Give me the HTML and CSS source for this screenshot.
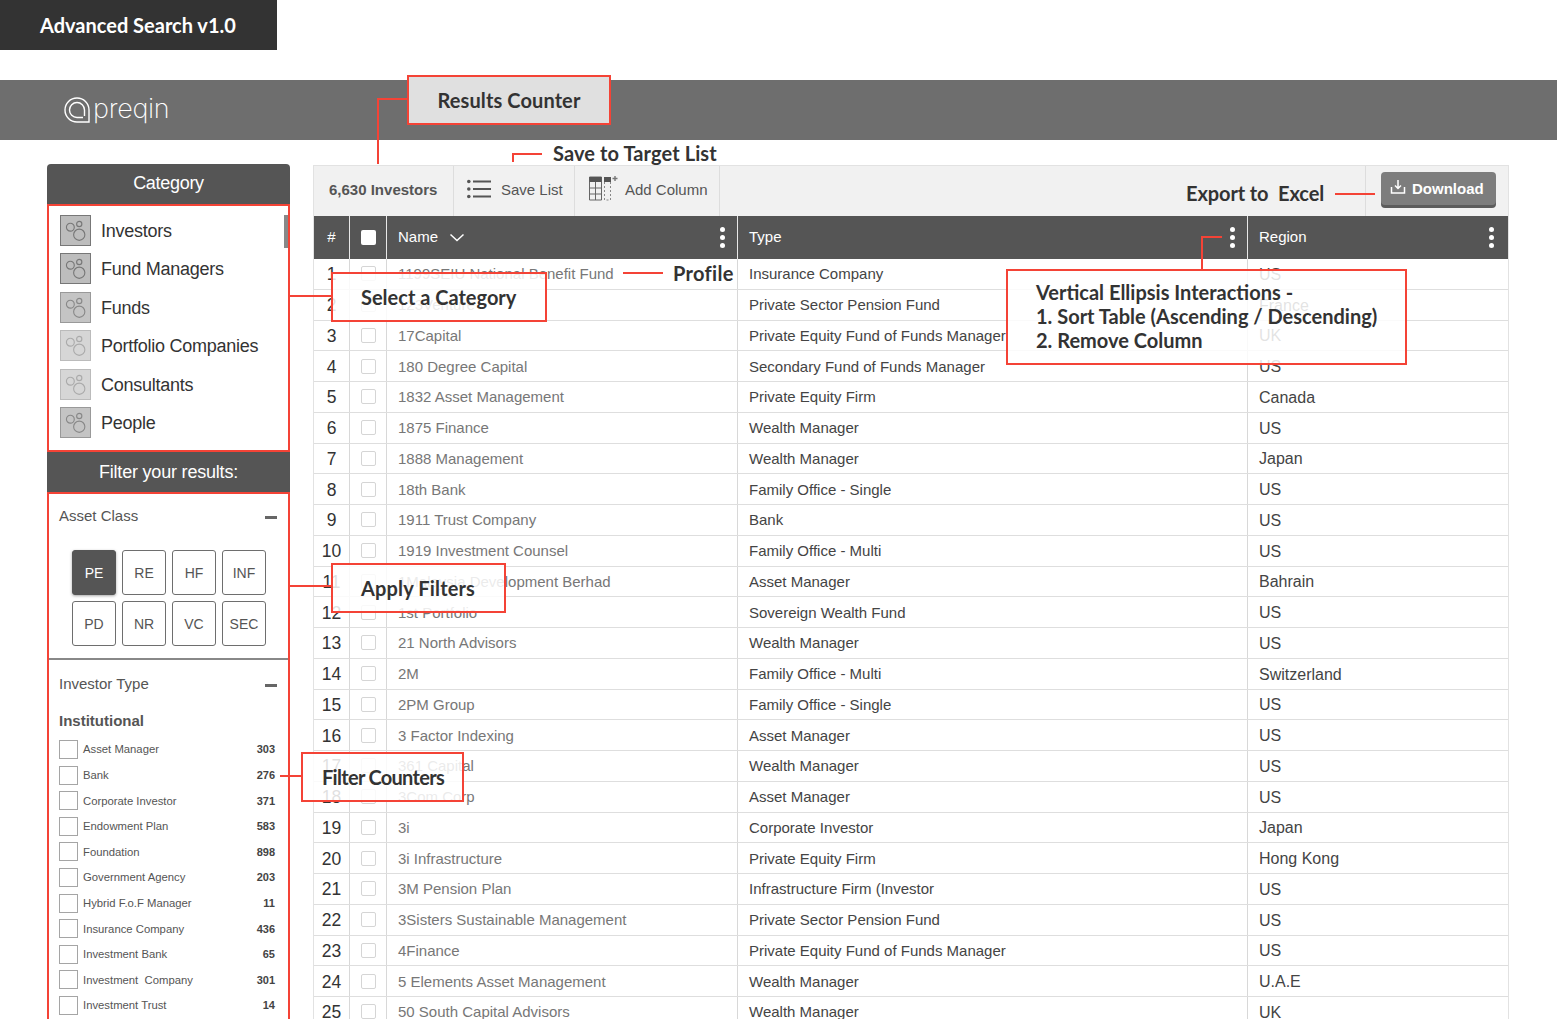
FILE: index.html
```html
<!DOCTYPE html>
<html>
  <head>
    <title>Advanced Search v1.0</title>
    <link rel="stylesheet" href="styles.css">
  </head>
  <body>
    <div class="page">
      <svg width="0" height="0" class="defs">
        <symbol id="cat-icon" viewBox="0 0 31 31">
          <circle cx="10" cy="12" r="4.2" />
          <circle cx="19.5" cy="8.5" r="2.8" />
          <circle cx="19.5" cy="20" r="6" />
        </symbol>
      </svg>

      <div class="title-bar">Advanced Search v1.0</div>

      <header class="top-bar">
        <svg class="logo-mark" width="28" height="28" viewBox="0 0 28 28">
          <path d="M14 26 H26 V14 A12 12 0 1 0 14 26 Z" />
          <path d="M14 21.5 H20 M21.5 20 V14 A7.5 7.5 0 1 0 14 21.5" />
        </svg>
        <span class="logo-text">preqin</span>
      </header>

      <div class="content">
        <aside class="sidebar">
          <div class="side-head side-head-top">Category</div>
          <div class="cat-list">
            <div class="cat-item"><svg class="cat-icon"><use href="#cat-icon" /></svg>Investors</div>
            <div class="cat-item"><svg class="cat-icon"><use href="#cat-icon" /></svg>Fund Managers</div>
            <div class="cat-item"><svg class="cat-icon light"><use href="#cat-icon" /></svg>Funds</div>
            <div class="cat-item"><svg class="cat-icon lighter"><use href="#cat-icon" /></svg>Portfolio Companies</div>
            <div class="cat-item"><svg class="cat-icon lighter"><use href="#cat-icon" /></svg>Consultants</div>
            <div class="cat-item"><svg class="cat-icon light"><use href="#cat-icon" /></svg>People</div>
            <div class="cat-scroll"></div>
          </div>
          <div class="side-head side-head-filter">Filter your results:</div>
          <div class="filter-box">
            <section class="filter-section">
              <div class="filter-head">Asset Class <span class="minus"></span></div>
              <div class="asset-grid">
                <div class="asset-btn active">PE</div>
                <div class="asset-btn">RE</div>
                <div class="asset-btn">HF</div>
                <div class="asset-btn">INF</div>
                <div class="asset-btn">PD</div>
                <div class="asset-btn">NR</div>
                <div class="asset-btn">VC</div>
                <div class="asset-btn">SEC</div>
              </div>
            </section>
            <section>
              <div class="filter-head filter-head-tall">Investor Type <span class="minus"></span></div>
              <div class="group-title">Institutional</div>
              <div class="check-row"><span class="check-box"></span><span class="check-label">Asset Manager</span><b>303</b></div>
              <div class="check-row"><span class="check-box"></span><span class="check-label">Bank</span><b>276</b></div>
              <div class="check-row"><span class="check-box"></span><span class="check-label">Corporate Investor</span><b>371</b></div>
              <div class="check-row"><span class="check-box"></span><span class="check-label">Endowment Plan</span><b>583</b></div>
              <div class="check-row"><span class="check-box"></span><span class="check-label">Foundation</span><b>898</b></div>
              <div class="check-row"><span class="check-box"></span><span class="check-label">Government Agency</span><b>203</b></div>
              <div class="check-row"><span class="check-box"></span><span class="check-label">Hybrid F.o.F Manager</span><b>11</b></div>
              <div class="check-row"><span class="check-box"></span><span class="check-label">Insurance Company</span><b>436</b></div>
              <div class="check-row"><span class="check-box"></span><span class="check-label">Investment Bank</span><b>65</b></div>
              <div class="check-row"><span class="check-box"></span><span class="check-label">Investment&nbsp; Company</span><b>301</b></div>
              <div class="check-row"><span class="check-box"></span><span class="check-label">Investment Trust</span><b>14</b></div>
            </section>
          </div>
        </aside>

        <main class="results">
          <div class="toolbar">
            <div class="tool tool-count">6,630 Investors</div>
            <div class="tool tool-save">
              <svg width="24" height="20" viewBox="0 0 24 20" class="tool-icon">
                <path d="M6 2.5 H24 M6 10 H24 M6 17.5 H24" />
                <circle cx="1.8" cy="2.5" r="1.8" />
                <circle cx="1.8" cy="10" r="1.8" />
                <circle cx="1.8" cy="17.5" r="1.8" />
              </svg>
              Save List
            </div>
            <div class="tool tool-add">
              <svg width="30" height="26" viewBox="0 0 30 26" class="col-icon">
                <path d="M0.5 2 H12.5 V25 H0.5 Z M0.5 13 H12.5 M0.5 19 H12.5 M6.5 7 V25" class="col-grid" />
                <path d="M0.5 2 H12.5 V7 H0.5 Z M15 2 H22 V7 H15 Z" class="col-fill" />
                <path d="M15.5 7 V25 H21.5 V7" class="col-dash" />
                <path d="M26 1 V6 M23.5 3.5 H28.5" class="col-plus" />
              </svg>
              Add Column
            </div>
            <div class="tool-spacer"></div>
            <div class="tool tool-download">
              <div class="download-btn">
                <svg width="16" height="16" viewBox="0 0 16 16">
                  <path d="M1.5 8 V14 H14.5 V8 M8 1 V9 M5 6.5 L8 9.5 L11 6.5" />
                </svg>
                Download
              </div>
            </div>
          </div>

          <div class="row row-head">
            <div class="cell">#</div>
            <div class="cell"><span class="row-check head-check"></span></div>
            <div class="cell cell-head-name">
              Name
              <svg width="16" height="9" viewBox="0 0 16 9" class="chevron"><path d="M1.5 1.5 L8 7.5 L14.5 1.5" /></svg>
              <span class="ellipsis"><i></i><i></i><i></i></span>
            </div>
            <div class="cell">Type <span class="ellipsis"><i></i><i></i><i></i></span></div>
            <div class="cell">Region <span class="ellipsis"><i></i><i></i><i></i></span></div>
          </div>

          <div class="row"><div class="cell">1</div><div class="cell"><span class="row-check"></span></div><div class="cell name">1199SEIU National Benefit Fund</div><div class="cell type">Insurance Company</div><div class="cell">US</div></div>
          <div class="row"><div class="cell">2</div><div class="cell"><span class="row-check"></span></div><div class="cell name">123Venture</div><div class="cell type">Private Sector Pension Fund</div><div class="cell">France</div></div>
          <div class="row"><div class="cell">3</div><div class="cell"><span class="row-check"></span></div><div class="cell name">17Capital</div><div class="cell type">Private Equity Fund of Funds Manager</div><div class="cell">UK</div></div>
          <div class="row"><div class="cell">4</div><div class="cell"><span class="row-check"></span></div><div class="cell name">180 Degree Capital</div><div class="cell type">Secondary Fund of Funds Manager</div><div class="cell">US</div></div>
          <div class="row"><div class="cell">5</div><div class="cell"><span class="row-check"></span></div><div class="cell name">1832 Asset Management</div><div class="cell type">Private Equity Firm</div><div class="cell">Canada</div></div>
          <div class="row"><div class="cell">6</div><div class="cell"><span class="row-check"></span></div><div class="cell name">1875 Finance</div><div class="cell type">Wealth Manager</div><div class="cell">US</div></div>
          <div class="row"><div class="cell">7</div><div class="cell"><span class="row-check"></span></div><div class="cell name">1888 Management</div><div class="cell type">Wealth Manager</div><div class="cell">Japan</div></div>
          <div class="row"><div class="cell">8</div><div class="cell"><span class="row-check"></span></div><div class="cell name">18th Bank</div><div class="cell type">Family Office - Single</div><div class="cell">US</div></div>
          <div class="row"><div class="cell">9</div><div class="cell"><span class="row-check"></span></div><div class="cell name">1911 Trust Company</div><div class="cell type">Bank</div><div class="cell">US</div></div>
          <div class="row"><div class="cell">10</div><div class="cell"><span class="row-check"></span></div><div class="cell name">1919 Investment Counsel</div><div class="cell type">Family Office - Multi</div><div class="cell">US</div></div>
          <div class="row"><div class="cell">11</div><div class="cell"><span class="row-check"></span></div><div class="cell name">1Malaysia Development Berhad</div><div class="cell type">Asset Manager</div><div class="cell">Bahrain</div></div>
          <div class="row"><div class="cell">12</div><div class="cell"><span class="row-check"></span></div><div class="cell name">1st Portfolio</div><div class="cell type">Sovereign Wealth Fund</div><div class="cell">US</div></div>
          <div class="row"><div class="cell">13</div><div class="cell"><span class="row-check"></span></div><div class="cell name">21 North Advisors</div><div class="cell type">Wealth Manager</div><div class="cell">US</div></div>
          <div class="row"><div class="cell">14</div><div class="cell"><span class="row-check"></span></div><div class="cell name">2M</div><div class="cell type">Family Office - Multi</div><div class="cell">Switzerland</div></div>
          <div class="row"><div class="cell">15</div><div class="cell"><span class="row-check"></span></div><div class="cell name">2PM Group</div><div class="cell type">Family Office - Single</div><div class="cell">US</div></div>
          <div class="row"><div class="cell">16</div><div class="cell"><span class="row-check"></span></div><div class="cell name">3 Factor Indexing</div><div class="cell type">Asset Manager</div><div class="cell">US</div></div>
          <div class="row"><div class="cell">17</div><div class="cell"><span class="row-check"></span></div><div class="cell name">361 Capital</div><div class="cell type">Wealth Manager</div><div class="cell">US</div></div>
          <div class="row"><div class="cell">18</div><div class="cell"><span class="row-check"></span></div><div class="cell name">3Com Corp</div><div class="cell type">Asset Manager</div><div class="cell">US</div></div>
          <div class="row"><div class="cell">19</div><div class="cell"><span class="row-check"></span></div><div class="cell name">3i</div><div class="cell type">Corporate Investor</div><div class="cell">Japan</div></div>
          <div class="row"><div class="cell">20</div><div class="cell"><span class="row-check"></span></div><div class="cell name">3i Infrastructure</div><div class="cell type">Private Equity Firm</div><div class="cell">Hong Kong</div></div>
          <div class="row"><div class="cell">21</div><div class="cell"><span class="row-check"></span></div><div class="cell name">3M Pension Plan</div><div class="cell type">Infrastructure Firm (Investor</div><div class="cell">US</div></div>
          <div class="row"><div class="cell">22</div><div class="cell"><span class="row-check"></span></div><div class="cell name">3Sisters Sustainable Management</div><div class="cell type">Private Sector Pension Fund</div><div class="cell">US</div></div>
          <div class="row"><div class="cell">23</div><div class="cell"><span class="row-check"></span></div><div class="cell name">4Finance</div><div class="cell type">Private Equity Fund of Funds Manager</div><div class="cell">US</div></div>
          <div class="row"><div class="cell">24</div><div class="cell"><span class="row-check"></span></div><div class="cell name">5 Elements Asset Management</div><div class="cell type">Wealth Manager</div><div class="cell">U.A.E</div></div>
          <div class="row"><div class="cell">25</div><div class="cell"><span class="row-check"></span></div><div class="cell name">50 South Capital Advisors</div><div class="cell type">Wealth Manager</div><div class="cell">UK</div></div>
        </main>
      </div>

      <!-- annotations drawn over the screen -->
      <svg class="leaders" width="1557" height="1019" viewBox="0 0 1557 1019">
        <path d="M407 99 H378 V164" />
        <path d="M542 154 H513 V162" />
        <path d="M623 273 H663" />
        <path d="M290 296 H331" />
        <path d="M290 586 H331" />
        <path d="M280 776 H301" />
        <path d="M1335 194 H1375" />
        <path d="M1222 237 H1202 V269" />
      </svg>
      <div class="note note-counter">Results Counter</div>
      <div class="note note-category">Select a Category</div>
      <div class="note note-filters">Apply Filters</div>
      <div class="note note-counters">Filter Counters</div>
      <div class="note note-ellipsis">Vertical Ellipsis Interactions -<br>1. Sort Table (Ascending / Descending)<br>2. Remove Column</div>
      <div class="label label-save">Save to Target List</div>
      <div class="label label-profile">Profile</div>
      <div class="label label-export">Export to&nbsp; Excel</div>
    </div>
  </body>
</html>
```

FILE: styles.css
```css
/* Reset */
html, body {
  margin: 0;
  padding: 0;
  height: 100%;
  overflow: hidden;
  background-color: #ffffff;
}

body {
  font-family: "Liberation Sans", Arial, sans-serif;
  color: #444444;
}

.page {
  position: relative;
  width: 1557px;
  height: 1019px;
  overflow: hidden;
}

.defs {
  position: absolute;
}

/* Title and top bar */
.title-bar {
  width: 277px;
  height: 50px;
  margin-bottom: 30px;
  padding-left: 40px;
  box-sizing: border-box;
  background-color: #333333;
  color: #ffffff;
  font-family: Lato, sans-serif;
  font-size: 20px;
  font-weight: 700;
  line-height: 51px;
}

.top-bar {
  display: flex;
  align-items: center;
  height: 60px;
  padding-left: 63px;
  background-color: #6e6e6e;
}

.logo-mark {
  fill: none;
  stroke: #ffffff;
  stroke-width: 1.4;
}

.logo-text {
  margin-left: 2px;
  margin-bottom: 3px;
  color: #ffffff;
  font-family: Inter, sans-serif;
  font-size: 27px;
  font-weight: 200;
  letter-spacing: -0.3px;
}

/* Main layout */
.content {
  display: flex;
  gap: 23px;
  padding: 24px 47px 0;
}

/* Sidebar */
.sidebar {
  flex: 0 0 243px;
  width: 243px;
}

.side-head {
  height: 40px;
  background-color: #555555;
  color: #ffffff;
  font-size: 18px;
  line-height: 38px;
  text-align: center;
  letter-spacing: -0.3px;
}

.side-head-top {
  border-radius: 4px 4px 0 0;
}

.side-head-filter {
  line-height: 41px;
  letter-spacing: -0.2px;
}

.cat-list {
  position: relative;
  height: 248px;
  padding: 9px 0 0 11px;
  box-sizing: border-box;
  border: 2px solid #f44336;
}

.cat-item {
  display: flex;
  align-items: flex-start;
  gap: 10px;
  height: 31px;
  margin-bottom: 7.4px;
  color: #333333;
  font-size: 18px;
  line-height: 33px;
  letter-spacing: -0.25px;
}

.cat-scroll {
  position: absolute;
  top: 9px;
  right: 0;
  width: 4px;
  height: 33px;
  background-color: #888888;
}

.cat-icon {
  width: 31px;
  height: 31px;
  box-sizing: border-box;
  border: 1.5px solid #777777;
  background-color: #bdbdbd;
  fill: none;
  stroke: #777777;
  stroke-width: 1.2;
}

.cat-icon.light {
  border-color: #999999;
  background-color: #c4c4c4;
  stroke: #888888;
}

.cat-icon.lighter {
  border-color: #bbbbbb;
  background-color: #d6d6d6;
  stroke: #aaaaaa;
}

.filter-box {
  border: 2px solid #f44336;
  border-bottom: none;
  height: 600px;
}

.filter-section {
  height: 164px;
  border-bottom: 2px solid #888888;
}

.filter-head {
  display: flex;
  align-items: center;
  justify-content: space-between;
  height: 42px;
  padding: 0 11px 0 10px;
  color: #555555;
  font-size: 15px;
}

.filter-head-tall {
  height: 46px;
}

.minus {
  width: 12px;
  height: 3px;
  margin-top: 4px;
  background-color: #666666;
}

.asset-grid {
  display: grid;
  grid-template-columns: repeat(4, 44px);
  grid-auto-rows: 45px;
  gap: 6px;
  margin: 14px 0 0 23px;
}

.asset-btn {
  box-sizing: border-box;
  border: 1.5px solid #6e6e6e;
  border-radius: 3px;
  color: #555555;
  font-size: 14px;
  line-height: 44px;
  text-align: center;
}

.asset-btn.active {
  border-color: #555555;
  background-color: #555555;
  color: #ffffff;
  box-shadow: 0 1px 3px rgba(0, 0, 0, 0.35);
}

.group-title {
  height: 30.7px;
  padding-left: 10px;
  color: #555555;
  font-size: 15px;
  font-weight: bold;
  line-height: 30px;
}

.check-row {
  display: flex;
  align-items: center;
  height: 25.6px;
  padding: 0 13px 0 10px;
  color: #555555;
  font-size: 11.3px;
}

.check-box {
  flex: 0 0 19px;
  height: 19px;
  margin-right: 5px;
  box-sizing: border-box;
  border: 1.5px solid #a5a5a5;
}

.check-label {
  flex: 1;
}

.check-row b {
  color: #444444;
  font-size: 11px;
}

/* Results panel */
.results {
  flex: 0 0 1196px;
  width: 1196px;
  height: 900px;
  margin-top: 1px;
  box-sizing: border-box;
  border: 1px solid #e2e2e2;
  border-bottom: none;
}

.toolbar {
  display: flex;
  height: 50px;
  background-color: #f1f1f1;
  color: #555555;
  font-size: 15px;
}

.tool {
  display: flex;
  align-items: center;
  padding-bottom: 4px;
  border-right: 1px solid #dddddd;
}

.tool-count {
  width: 140px;
  padding-left: 15px;
  box-sizing: border-box;
  font-weight: bold;
}

.tool-save {
  width: 121px;
  padding-left: 13px;
  gap: 10px;
  box-sizing: border-box;
}

.tool-add {
  width: 145px;
  padding-left: 14px;
  gap: 6px;
  box-sizing: border-box;
}

.tool-spacer {
  flex: 1;
  border-right: 1px solid #dddddd;
}

.tool-download {
  width: 142px;
  padding-left: 15px;
  box-sizing: border-box;
  border-right: none;
  align-items: flex-start;
}

.tool-icon {
  fill: #555555;
  stroke: none;
}

.tool-icon path {
  fill: none;
  stroke: #555555;
  stroke-width: 2;
}

.col-icon {
  margin-bottom: 2px;
  fill: none;
}

.col-grid {
  stroke: #666666;
  stroke-width: 1;
}

.col-fill {
  fill: #555555;
}

.col-dash {
  stroke: #888888;
  stroke-width: 1;
  stroke-dasharray: 2 2;
}

.col-plus {
  stroke: #777777;
  stroke-width: 1.4;
}

.download-btn {
  display: flex;
  align-items: center;
  gap: 6px;
  width: 115px;
  height: 33px;
  margin-top: 6px;
  padding-left: 9px;
  box-sizing: border-box;
  border-radius: 4px;
  background-color: #7d7d7d;
  box-shadow: 0 3px 0 #5c5c5c;
  color: #ffffff;
  font-size: 15px;
  font-weight: bold;
}

.download-btn svg {
  fill: none;
  stroke: #ffffff;
  stroke-width: 1.5;
  margin-bottom: 4px;
}

/* Table */
.row {
  display: grid;
  grid-template-columns: 36px 37px 351px 510px 1fr;
  height: 30.75px;
  box-sizing: border-box;
  border-bottom: 1px solid #dedede;
  color: #444444;
  font-size: 15px;
}

.row-head {
  height: 43px;
  border-bottom: none;
  background-color: #555555;
  color: #ffffff;
}

.cell {
  display: flex;
  align-items: center;
  position: relative;
  padding-top: 2px;
  padding-left: 11px;
  box-sizing: border-box;
  border-right: 1px solid #d8d8d8;
  white-space: nowrap;
}

.cell:first-child {
  justify-content: center;
  padding-left: 0;
  color: #333333;
  font-size: 17.5px;
}

.cell:nth-child(2) {
  justify-content: center;
  padding-top: 0;
  padding-left: 0;
}

.cell:last-child {
  border-right: none;
  font-size: 16px;
}

.row-head .cell {
  padding-top: 0;
  padding-bottom: 3px;
  border-right-color: #e8e8e8;
  color: #ffffff;
  font-size: 15px;
}

.row-head .cell:nth-child(2) {
  padding-bottom: 0;
}

.name {
  padding-top: 0;
  color: #777777;
}

.type {
  padding-top: 0;
}

.cell-head-name {
  gap: 11px;
}

.chevron {
  fill: none;
  stroke: #ffffff;
  stroke-width: 1.5;
  margin-top: 3px;
}

.ellipsis {
  position: absolute;
  top: 11px;
  right: 12px;
  display: flex;
  flex-direction: column;
  gap: 3px;
}

.cell:last-child .ellipsis {
  right: 14px;
}

.ellipsis i {
  display: block;
  width: 5px;
  height: 5px;
  border-radius: 50%;
  background-color: #ffffff;
}

.row-check {
  width: 15px;
  height: 15px;
  box-sizing: border-box;
  border: 1px solid #d5d5d5;
  border-radius: 2px;
}

.head-check {
  border: none;
  background-color: #ffffff;
}

/* Annotations */
.leaders {
  position: absolute;
  top: 0;
  left: 0;
  fill: none;
  stroke: #f44336;
  stroke-width: 2;
}

.note {
  position: absolute;
  box-sizing: border-box;
  border: 2px solid #f44336;
  background-color: rgba(255, 255, 255, 0.85);
  color: #333333;
  font-family: Lato, sans-serif;
  font-size: 20px;
  font-weight: 700;
  white-space: nowrap;
}

.label {
  position: absolute;
  color: #333333;
  font-family: Lato, sans-serif;
  font-size: 20px;
  font-weight: 700;
  line-height: 26px;
  white-space: nowrap;
}

.note-counter {
  top: 75px;
  left: 407px;
  width: 204px;
  height: 50px;
  background-color: #e0e0e0;
  line-height: 47px;
  text-align: center;
  letter-spacing: 0.1px;
}

.note-category {
  top: 272px;
  left: 331px;
  width: 216px;
  height: 50px;
  padding-left: 28px;
  line-height: 47px;
}

.note-filters {
  top: 563px;
  left: 331px;
  width: 175px;
  height: 50px;
  padding-left: 28px;
  line-height: 47px;
  letter-spacing: 0.15px;
}

.note-counters {
  top: 752px;
  left: 301px;
  width: 163px;
  height: 50px;
  padding-left: 19px;
  line-height: 47px;
  letter-spacing: -0.7px;
}

.note-ellipsis {
  top: 269px;
  left: 1006px;
  width: 401px;
  height: 96px;
  padding: 9px 0 0 28px;
  line-height: 24px;
}

.label-save {
  top: 140px;
  left: 553px;
  letter-spacing: 0.1px;
}

.label-profile {
  top: 260px;
  left: 673px;
  letter-spacing: 0.3px;
}

.label-export {
  top: 180px;
  left: 1186px;
  letter-spacing: -0.1px;
}
```
